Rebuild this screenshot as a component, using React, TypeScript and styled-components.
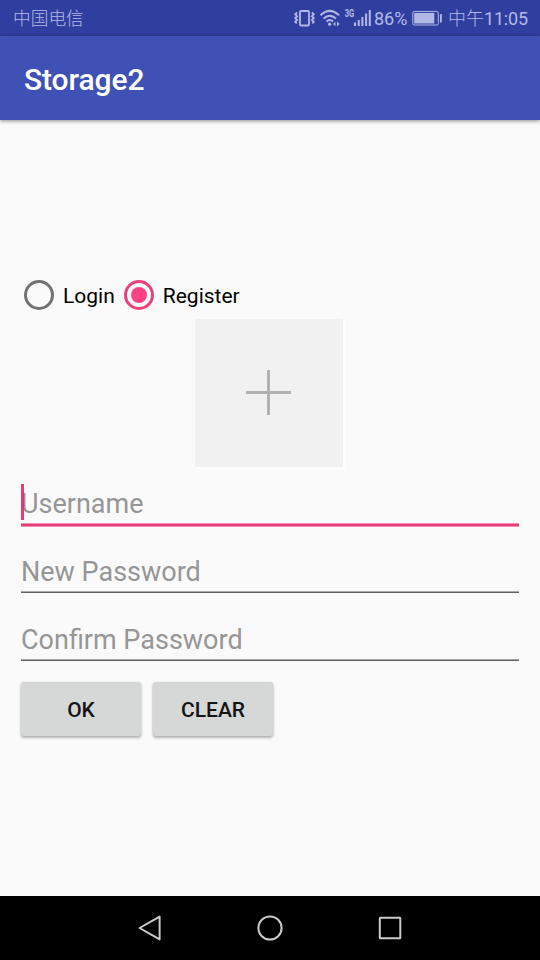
import React from "react";
import styled, { createGlobalStyle } from "styled-components";

const GlobalStyle = createGlobalStyle`
  *, *::before, *::after { box-sizing: border-box; }
  body { margin: 0; background: #fafafa; }
`;

const Screen = styled.div`
  width: 540px;
  height: 960px;
  display: flex;
  flex-direction: column;
  overflow: hidden;
  background: #fafafa;
  color: #000;
  font-family: Roboto, "Noto Sans CJK SC", sans-serif;
`;

const StatusBar = styled.header`
  flex: none;
  height: 36px;
  padding: 0 12px 0 13px;
  display: flex;
  align-items: center;
  justify-content: space-between;
  background: #303f9f;
  color: #b3b9e6;
  font-size: 18px;
  line-height: 36px;
  white-space: nowrap;
`;

const Carrier = styled.span`
  font-weight: 300;
  font-size: 17.7px;
  padding-top: 2px;
`;

const StatusGroup = styled.div`
  display: flex;
  align-items: center;
`;

const StatusIcons = styled.svg`
  display: block;
  margin-right: 2px;
`;

const Percent = styled.span`
  width: 34px;
  padding-top: 2px;
`;

const Battery = styled.svg`
  display: block;
  margin: 0 5px 0 4px;
`;

const Clock = styled.span`
  width: 80px;
  font-weight: 300;
  padding-top: 2px;
`;

const ClockDigits = styled.span`
  font-weight: 400;
  letter-spacing: -0.2px;
`;

const AppBar = styled.div`
  flex: none;
  height: 84px;
  padding: 3px 24px 0;
  display: flex;
  align-items: center;
  background: #3f51b5;
  box-shadow: 0 1px 4px rgba(0, 0, 0, 0.45);
`;

const Title = styled.h1`
  margin: 0;
  color: #fff;
  font-size: 30px;
  font-weight: 500;
  line-height: 36px;
  letter-spacing: -0.1px;
`;

const Form = styled.form`
  flex: 1;
  padding: 157px 21px 0;
  display: flex;
  flex-direction: column;
`;

const RadioGroup = styled.div`
  height: 36px;
  padding-left: 3px;
  display: flex;
  align-items: center;
  gap: 9px;
`;

const RadioOption = styled.label`
  display: flex;
  align-items: center;
  gap: 9px;
  font-size: 21px;
  line-height: 30px;
`;

const RadioMark = styled.span<{ $checked?: boolean }>`
  width: 30px;
  height: 30px;
  display: grid;
  place-items: center;
  border: 3px solid ${(p) => (p.$checked ? "#ea407c" : "#727272")};
  border-radius: 50%;

  &::after {
    content: "";
    width: 16px;
    height: 16px;
    border-radius: 50%;
    background: ${(p) => (p.$checked ? "#ff4081" : "transparent")};
  }
`;

const RadioLabel = styled.span`
  padding-top: 2px;
`;

const PhotoPicker = styled.button`
  align-self: center;
  width: 150px;
  height: 150px;
  margin: 6px 0 0;
  padding: 0;
  border: solid #fefefe;
  border-width: 0 2px 2px 0;
  background: #f1f1f1;
`;

const Field = styled.div<{ $focused?: boolean }>`
  height: 68px;
  padding-top: 15px;
  display: flex;
  flex-direction: column;

  &::after {
    content: "";
    height: ${(p) => (p.$focused ? "4px" : "2px")};
    margin-top: 2px;
    background: ${(p) =>
      p.$focused
        ? "linear-gradient(#f08db1 1px, #e4407b 1px 3px, #f08db1 3px)"
        : "linear-gradient(#a8a8a8 1px, #606060 1px)"};
  }
`;

const FieldText = styled.div`
  position: relative;
  height: 37px;
  padding-top: 3px;
  color: #969696;
  font-size: 27px;
  line-height: 34px;
`;

const Caret = styled.span`
  position: absolute;
  left: 0;
  top: 0;
  width: 3px;
  height: 36px;
  background: rgba(229, 42, 108, 0.92);
`;

const Actions = styled.div`
  margin-top: 9px;
  display: flex;
  gap: 12px;
`;

const ActionButton = styled.button`
  width: 120px;
  height: 54px;
  padding: 2px 0 0;
  border: 0;
  border-radius: 3px;
  background: #d6d7d7;
  box-shadow: 0 2px 3px rgba(0, 0, 0, 0.28), 0 0 2px rgba(0, 0, 0, 0.12);
  color: #141414;
  font-family: inherit;
  font-size: 21px;
  font-weight: 500;
`;

const NavBar = styled.nav`
  flex: none;
  height: 64px;
  display: flex;
  justify-content: center;
  align-items: center;
  gap: 80px;
  background: #000;
`;

const NavIcon = styled.svg`
  width: 40px;
  height: 40px;
  fill: none;
  stroke: #cbcbcb;
  stroke-width: 2;
  stroke-linejoin: round;
`;

function ConnectivityIcons() {
  return (
    <StatusIcons width="79" height="20" viewBox="293 8 79 20" fill="none" stroke="#b3b9e6">
      <rect x="300" y="11" width="9" height="14.5" rx="1" strokeWidth="1.8" />
      <path d="M297.2 12.5l-2 1.8 2 1.9-2 1.9 2 1.9-2 1.9 1.5 1.6M311.8 12.5l2 1.8-2 1.9 2 1.9-2 1.9 2 1.9-1.5 1.6" strokeWidth="1.8" />
      <path d="M320.5 15.3Q329.7 6.5 339 15.3M323.6 18.6Q329.7 12.8 335.9 18.6M326.5 21.5Q329.7 18.6 333 21.5" strokeWidth="2" />
      <circle cx="329.7" cy="24.2" r="1.6" fill="#b3b9e6" stroke="none" />
      <path d="M333 24l2.4-2.2v4.4zM339.6 24l-2.6-2.4v4.8z" fill="#b3b9e6" stroke="none" />
      <text x="344.7" y="17.4" fill="#b3b9e6" stroke="none" fontFamily="Roboto, sans-serif" fontSize="11" fontWeight="700" textLength="9.5" lengthAdjust="spacingAndGlyphs">3G</text>
      <path d="M355 22.5V26M358.7 20V26M362.4 17V26M366.1 13.5V26M369.8 10V26" strokeWidth="2" />
    </StatusIcons>
  );
}

export default function App() {
  return (
    <>
      <GlobalStyle />
      <Screen>
        <StatusBar>
          <Carrier>中国电信</Carrier>
          <StatusGroup>
            <ConnectivityIcons />
            <Percent>86%</Percent>
            <Battery width="31" height="16" viewBox="0 0 31 16">
              <rect x="0.8" y="1.4" width="25.5" height="13.6" rx="1.5" fill="none" stroke="#b3b9e6" strokeWidth="1" />
              <path d="M2.2 2.9H22.3V13.5H2.2z" fill="#b3b9e6" />
              <rect x="28" y="4" width="1.8" height="8.4" rx="0.5" fill="#b3b9e6" />
            </Battery>
            <Clock>中午<ClockDigits>11:05</ClockDigits></Clock>
          </StatusGroup>
        </StatusBar>
        <AppBar>
          <Title>Storage2</Title>
        </AppBar>
        <Form>
          <RadioGroup role="radiogroup">
            <RadioOption>
              <RadioMark />
              <RadioLabel>Login</RadioLabel>
            </RadioOption>
            <RadioOption>
              <RadioMark $checked />
              <RadioLabel>Register</RadioLabel>
            </RadioOption>
          </RadioGroup>
          <PhotoPicker type="button" aria-label="Add photo">
            <svg width="148" height="148" viewBox="0 0 148 148" display="block">
              <path d="M51 73.5H96M73.5 51V96" stroke="#b1b1b1" strokeWidth="3" />
            </svg>
          </PhotoPicker>
          <Field $focused>
            <FieldText>
              Username
              <Caret />
            </FieldText>
          </Field>
          <Field>
            <FieldText>New Password</FieldText>
          </Field>
          <Field>
            <FieldText>Confirm Password</FieldText>
          </Field>
          <Actions>
            <ActionButton type="button">OK</ActionButton>
            <ActionButton type="button">CLEAR</ActionButton>
          </Actions>
        </Form>
        <NavBar>
          <NavIcon viewBox="0 0 40 40">
            <path d="M20 8.6V31.4L0 20z" transform="translate(9.6 0)" />
          </NavIcon>
          <NavIcon viewBox="0 0 40 40">
            <circle cx="20" cy="20" r="11.6" />
          </NavIcon>
          <NavIcon viewBox="0 0 40 40">
            <rect x="9.8" y="9.8" width="20.5" height="20.5" rx="0.5" />
          </NavIcon>
        </NavBar>
      </Screen>
    </>
  );
}
